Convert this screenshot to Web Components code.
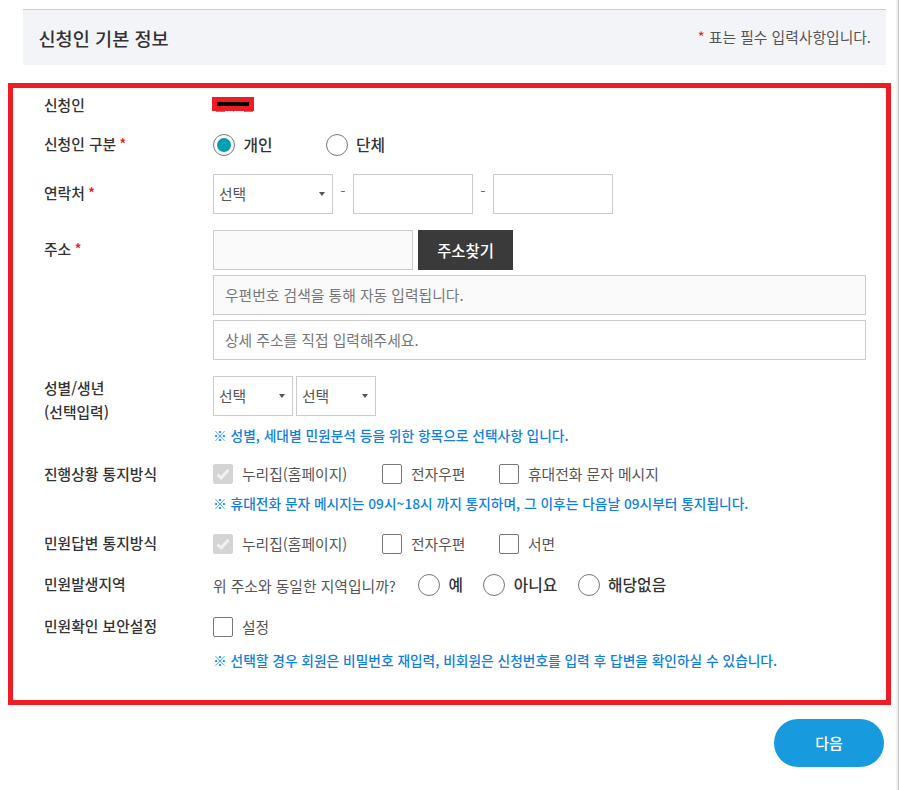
<!DOCTYPE html>
<html lang="ko">
<head>
<meta charset="utf-8">
<title>신청인 기본 정보</title>
<style>
  html, body { margin: 0; height: 100%; background: #fff; overflow: hidden; }
  body {
    font-family: "Noto Sans CJK KR", "Noto Sans", sans-serif;
    font-size: 14.8px;
    color: #333;
  }
  .page { display: flex; height: 790px; }
  .main { width: 896px; padding: 9px 0 0 8px; box-sizing: border-box; }
  .scroll { width: 3px; background: #f1f1f1; box-shadow: inset -1px 0 0 #c8c8c8; }
  .line { display: flex; }
  .first { width: 135.5px; }
</style>
</head>
<body>
<div class="page">
  <div class="main">
    <info-head title-text="신청인 기본 정보"></info-head>
    <form-box>
      <form-row label="신청인" style="--lh:20px;--label-top:0">
        <redact-mark></redact-mark>
      </form-row>
      <form-row label="신청인 구분" required style="--gap:19px;--lh:22px">
        <div class="line" style="gap:53px">
          <x-radio checked>개인</x-radio>
          <x-radio>단체</x-radio>
        </div>
      </form-row>
      <form-row label="연락처" required style="--gap:18px;--lh:40px">
        <div class="line" style="align-items:center">
          <x-select width="120"></x-select>
          <x-dash></x-dash>
          <x-input width="120"></x-input>
          <x-dash></x-dash>
          <x-input width="120"></x-input>
        </div>
      </form-row>
      <form-row label="주소" required style="--gap:16px;--lh:40px">
        <div class="line" style="flex-direction:column;gap:5px">
          <div class="line" style="gap:5px">
            <x-input width="200" readonly></x-input>
            <x-button>주소찾기</x-button>
          </div>
          <x-input fill readonly placeholder="우편번호 검색을 통해 자동 입력됩니다."></x-input>
          <x-input fill placeholder="상세 주소를 직접 입력해주세요."></x-input>
        </div>
      </form-row>
      <form-row label="성별/생년<br>(선택입력)" style="--gap:16px;--lh:24px;--label-top:0">
        <div class="line" style="gap:3px">
          <x-select width="80"></x-select>
          <x-select width="80"></x-select>
        </div>
        <x-note>※ 성별, 세대별 민원분석 등을 위한 항목으로 선택사항 입니다.</x-note>
      </form-row>
      <form-row label="진행상황 통지방식" style="--gap:19px;--lh:20px;--label-top:0">
        <div class="line" style="gap:33.5px">
          <x-check class="first" checked disabled>누리집(홈페이지)</x-check>
          <x-check>전자우편</x-check>
          <x-check>휴대전화 문자 메시지</x-check>
        </div>
        <x-note>※ 휴대전화 문자 메시지는 09시~18시 까지 통지하며, 그 이후는 다음날 09시부터 통지됩니다.</x-note>
      </form-row>
      <form-row label="민원답변 통지방식" style="--gap:21px;--lh:20px">
        <div class="line" style="gap:33.5px">
          <x-check class="first" checked disabled>누리집(홈페이지)</x-check>
          <x-check>전자우편</x-check>
          <x-check>서면</x-check>
        </div>
      </form-row>
      <form-row label="민원발생지역" style="--gap:20px;--lh:22px">
        <div class="line" style="align-items:center;gap:20.2px">
          <span style="color:#555;margin-right:2px">위 주소와 동일한 지역입니까?</span>
          <x-radio>예</x-radio>
          <x-radio>아니요</x-radio>
          <x-radio>해당없음</x-radio>
        </div>
      </form-row>
      <form-row label="민원확인 보안설정" style="--gap:21px;--lh:20px">
        <div class="line"><x-check>설정</x-check></div>
        <x-note style="--note-top:13px">※ 선택할 경우 회원은 비밀번호 재입력, 비회원은 신청번호를 입력 후 답변을 확인하실 수 있습니다.</x-note>
      </form-row>
    </form-box>
    <next-button>다음</next-button>
  </div>
  <div class="scroll"></div>
</div>

<script>
function shadow(el, html) {
  el.attachShadow({ mode: 'open' }).innerHTML = html;
}

class InfoHead extends HTMLElement {
  connectedCallback() {
    shadow(this, `
      <style>
        :host {
          display: flex; justify-content: space-between; align-items: center;
          box-sizing: border-box; margin-left: 15px; width: 863px; height: 56px;
          padding: 0 15px 2px 15.5px; background: #f3f4f8; border-top: 1px solid #c9ccd2;
        }
        h2 { margin: 2px 0 0; font-size: 18.6px; font-weight: 500; color: #333; }
        p { margin: 0; font-size: 14.8px; color: #555; }
        b { color: #e8202a; font-weight: 400; }
      </style>
      <h2>${this.getAttribute('title-text')}</h2>
      <p><b>*</b> 표는 필수 입력사항입니다.</p>`);
  }
}

class FormBox extends HTMLElement {
  connectedCallback() {
    shadow(this, `
      <style>
        :host {
          display: block; box-sizing: border-box; width: 883px; height: 622px;
          margin-top: 18px; padding: 7px 20px 0 31px; border: 5px solid #ee1c25;
        }
      </style>
      <slot></slot>`);
  }
}

class FormRow extends HTMLElement {
  connectedCallback() {
    const req = this.hasAttribute('required') ? ' <b>*</b>' : '';
    shadow(this, `
      <style>
        :host { display: flex; margin-top: var(--gap, 0); }
        .label {
          flex: 0 0 169px; box-sizing: border-box; height: max-content; margin-top: var(--label-top, -1px);
          font-size: 14.8px; font-weight: 500; color: #333; line-height: var(--lh, 20px);
        }
        b { margin-left: -1px; color: #e8202a; font-weight: 500; }
        .body { flex: 1; min-width: 0; min-height: 20px; }
      </style>
      <div class="label">${this.getAttribute('label')}${req}</div>
      <div class="body"><slot></slot></div>`);
  }
}

class XRadio extends HTMLElement {
  connectedCallback() {
    shadow(this, `
      <style>
        :host { display: inline-flex; align-items: center; gap: 8.5px; font-size: 15.8px; font-weight: 500; color: #333; height: 22px; line-height: 22px; }
        i { box-sizing: border-box; width: 22px; height: 22px; border: 1px solid #777; border-radius: 50%; background: #fff; display: flex; align-items: center; justify-content: center; }
        u { width: 14px; height: 14px; border-radius: 50%; background: #00a0b0; }
      </style>
      <i>${this.hasAttribute('checked') ? '<u></u>' : ''}</i><slot></slot>`);
  }
}

class XCheck extends HTMLElement {
  connectedCallback() {
    const on = this.hasAttribute('checked');
    const dis = this.hasAttribute('disabled');
    shadow(this, `
      <style>
        :host { display: inline-flex; align-items: center; gap: 9px; font-size: 14.8px; color: #555; height: 20px; line-height: 20px; white-space: nowrap; }
        i { box-sizing: border-box; width: 20px; height: 20px; border: 1px solid #777; border-radius: 2px; display: flex; align-items: center; justify-content: center; }
        i.dis { background: #d4d4d4; border-color: #d4d4d4; }
        svg { display: block; }
      </style>
      <i class="${dis ? 'dis' : ''}">${on ? '<svg width="14" height="12" viewBox="0 0 14 12"><path d="M1.5 6.5 5.2 10 12.5 1.8" fill="none" stroke="#f1f1f1" stroke-width="3"/></svg>' : ''}</i><slot></slot>`);
  }
}

class XSelect extends HTMLElement {
  connectedCallback() {
    const w = this.getAttribute('width');
    shadow(this, `
      <style>
        :host { display: flex; align-items: center; justify-content: space-between; box-sizing: border-box; width: ${w}px; height: 40px; border: 1px solid #ccc; padding: 0 7px 2px 5px; background: #fff; font-size: 14.8px; color: #555; }
        u { width: 0; height: 0; margin-top: 2px; border: 3.75px solid transparent; border-top: 4px solid #555; border-bottom: 0; }
      </style>
      <span>선택</span><u></u>`);
  }
}

class XInput extends HTMLElement {
  connectedCallback() {
    const fill = this.hasAttribute('fill');
    const w = this.getAttribute('width');
    const ro = this.hasAttribute('readonly');
    shadow(this, `
      <style>
        :host { display: flex; align-items: center; box-sizing: border-box; ${fill ? '' : `width:${w}px;`} height: 40px; border: 1px solid #ccc; padding: 0 11px 1px; background: ${ro ? '#fafafa' : '#fff'}; font-size: 14.8px; color: #777; }
      </style>
      <span>${this.getAttribute('placeholder') || ''}</span>`);
  }
}

class XDash extends HTMLElement {
  connectedCallback() {
    shadow(this, `
      <style>:host { display: block; width: 20px; text-align: center; color: #666; font-size: 14px; line-height: 34px; height: 40px; }</style>-`);
  }
}

class XButton extends HTMLElement {
  connectedCallback() {
    shadow(this, `
      <style>:host { display: flex; align-items: center; justify-content: center; box-sizing: border-box; width: 95px; height: 40px; padding-bottom: 1px; background: #3a3a3a; color: #fff; font-size: 15.4px; font-weight: 500; }</style>
      <slot></slot>`);
  }
}

class XNote extends HTMLElement {
  connectedCallback() {
    shadow(this, `
      <style>:host { display: block; margin-top: var(--note-top, 9px); font-size: 13.73px; line-height: 20px; font-weight: 500; color: #1080dc; white-space: nowrap; }</style>
      <slot></slot>`);
  }
}

class RedactMark extends HTMLElement {
  connectedCallback() {
    shadow(this, `
      <style>
        :host { display: block; position: relative; box-sizing: border-box; width: 42px; height: 14px; margin: 2px 0 0 -1px; background: #ee1c25; padding: 5px; }
        i { display: block; height: 4px; background: #000; }
        s { position: absolute; left: 4px; right: 1px; top: 14px; height: 1px; background: linear-gradient(90deg, #888 0 9px, transparent 9px 17px, #bbb 17px 18px, transparent 18px 28px, #888 28px 37px); }
      </style>
      <i></i><s></s>`);
  }
}

class NextButton extends HTMLElement {
  connectedCallback() {
    shadow(this, `
      <style>
        :host { display: flex; align-items: center; justify-content: center; box-sizing: border-box; width: 110px; height: 48px; margin: 14px 0 0 766px; padding-bottom: 1px; border-radius: 24px; background: #179ade; color: #fff; font-size: 15px; font-weight: 500; }
      </style>
      <slot></slot>`);
  }
}

customElements.define('info-head', InfoHead);
customElements.define('form-box', FormBox);
customElements.define('form-row', FormRow);
customElements.define('x-radio', XRadio);
customElements.define('x-check', XCheck);
customElements.define('x-select', XSelect);
customElements.define('x-input', XInput);
customElements.define('x-dash', XDash);
customElements.define('x-button', XButton);
customElements.define('x-note', XNote);
customElements.define('redact-mark', RedactMark);
customElements.define('next-button', NextButton);
</script>
</body>
</html>
